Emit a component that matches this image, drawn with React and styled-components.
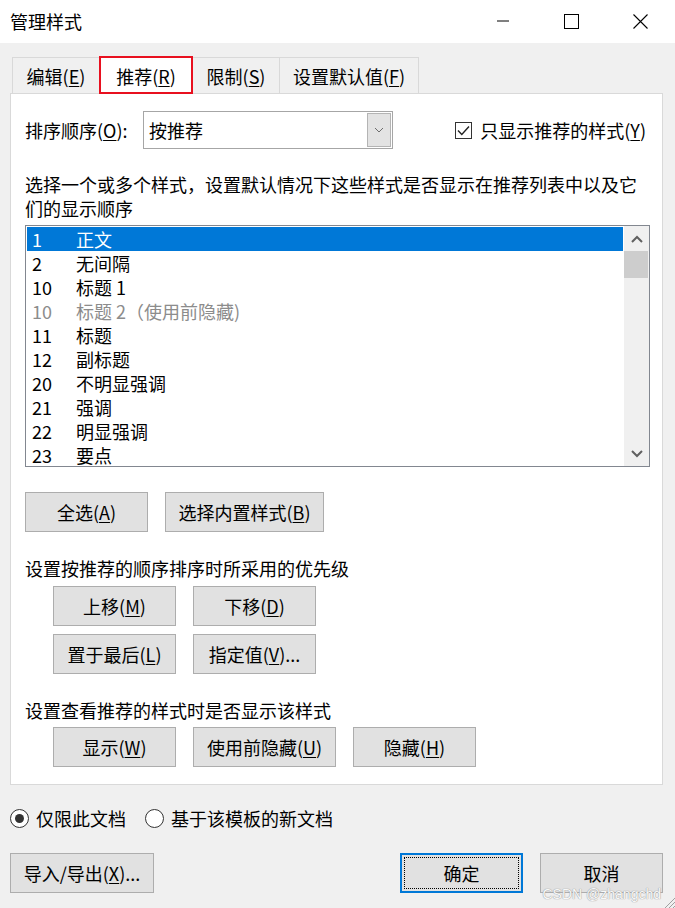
import React from 'react';
import styled, { createGlobalStyle, css } from 'styled-components';

const GlobalStyle = createGlobalStyle`
  html, body {
    margin: 0;
    padding: 0;
    background: #f0f0f0;
  }
  body {
    font-family: "Noto Sans CJK SC", "Noto Sans", sans-serif;
    font-size: 18px;
    color: #000;
  }
  * { box-sizing: border-box; }
`;

const styles = [
  { no: '1', name: '正文', selected: true },
  { no: '2', name: '无间隔' },
  { no: '10', name: '标题 1' },
  { no: '10', name: '标题 2（使用前隐藏)', hidden: true },
  { no: '11', name: '标题' },
  { no: '12', name: '副标题' },
  { no: '20', name: '不明显强调' },
  { no: '21', name: '强调' },
  { no: '22', name: '明显强调' },
  { no: '23', name: '要点' },
];

function Key({ pre, k, post = ')' }) {
  return (
    <>
      {pre}(<Und>{k}</Und>{post}
    </>
  );
}

export default function App() {
  return (
    <Window>
      <GlobalStyle />
      <TitleBar>
        <Title>管理样式</Title>
        <Controls>
          <CtrlBtn>
            <svg width="12" height="2" viewBox="0 0 12 2"><line x1="0" y1="1" x2="12" y2="1" stroke="#000" strokeWidth="1" /></svg>
          </CtrlBtn>
          <CtrlBtn>
            <svg width="15" height="15" viewBox="0 0 15 15"><rect x="0.5" y="0.5" width="14" height="14" fill="none" stroke="#000" strokeWidth="1" /></svg>
          </CtrlBtn>
          <CtrlBtn>
            <svg width="15" height="15" viewBox="0 0 15 15"><path d="M0.5 0.5 L14.5 14.5 M14.5 0.5 L0.5 14.5" stroke="#000" strokeWidth="1.1" /></svg>
          </CtrlBtn>
        </Controls>
      </TitleBar>

      <Body>
        <TabRow>
          <Tab w={88}><Key pre="编辑" k="E" /></Tab>
          <Tab w={94} active><Key pre="推荐" k="R" /></Tab>
          <Tab w={88}><Key pre="限制" k="S" /></Tab>
          <Tab w={140}><Key pre="设置默认值" k="F" /></Tab>
        </TabRow>

        <Panel>
          <SortRow>
            <SortLabel><Key pre="排序顺序" k="O" post="):" /></SortLabel>
            <Combo>
              <ComboValue>按推荐</ComboValue>
              <DropBtn>
                <svg width="10" height="6" viewBox="0 0 10 6"><path d="M1 1 L5 5 L9 1" fill="none" stroke="#6d6d6d" strokeWidth="1" /></svg>
              </DropBtn>
            </Combo>
            <Check>
              <CheckBox>
                <svg width="13" height="11" viewBox="0 0 13 11"><path d="M1 5.5 L4.8 9.5 L12 1.5" fill="none" stroke="#222" strokeWidth="1.4" /></svg>
              </CheckBox>
              <Text><Key pre="只显示推荐的样式" k="Y" /></Text>
            </Check>
          </SortRow>

          <Desc>选择一个或多个样式，设置默认情况下这些样式是否显示在推荐列表中以及它们的显示顺序</Desc>

          <ListBox>
            <Rows>
              {styles.map((s, i) => (
                <Row key={i} selected={s.selected} hidden_={s.hidden}>
                  <Num>{s.no}</Num>
                  <span>{s.name}</span>
                </Row>
              ))}
            </Rows>
            <ScrollBar>
              <ScrollArrow>
                <svg width="12" height="8" viewBox="0 0 12 8"><path d="M1 7 L6 2 L11 7" fill="none" stroke="#606060" strokeWidth="2" /></svg>
              </ScrollArrow>
              <Thumb />
              <Track />
              <ScrollArrow>
                <svg width="12" height="8" viewBox="0 0 12 8"><path d="M1 1 L6 6 L11 1" fill="none" stroke="#606060" strokeWidth="2" /></svg>
              </ScrollArrow>
            </ScrollBar>
          </ListBox>

          <BtnRow top={25} indent={0}>
            <Button w={123}><Key pre="全选" k="A" /></Button>
            <Button w={159}><Key pre="选择内置样式" k="B" /></Button>
          </BtnRow>

          <Section>设置按推荐的顺序排序时所采用的优先级</Section>
          <BtnRow top={6} indent={28}>
            <Button w={123}><Key pre="上移" k="M" /></Button>
            <Button w={123}><Key pre="下移" k="D" /></Button>
          </BtnRow>
          <BtnRow top={8} indent={28}>
            <Button w={123}><Key pre="置于最后" k="L" /></Button>
            <Button w={123}><Key pre="指定值" k="V" post=")..." /></Button>
          </BtnRow>

          <Section>设置查看推荐的样式时是否显示该样式</Section>
          <BtnRow top={5} indent={28}>
            <Button w={123}><Key pre="显示" k="W" /></Button>
            <Button w={143}><Key pre="使用前隐藏" k="U" /></Button>
            <Button w={123}><Key pre="隐藏" k="H" /></Button>
          </BtnRow>
        </Panel>

        <RadioRow>
          <Radio>
            <RadioCircle checked />
            <Text>仅限此文档</Text>
          </Radio>
          <Radio>
            <RadioCircle />
            <Text>基于该模板的新文档</Text>
          </Radio>
        </RadioRow>

        <FooterRow>
          <Button w={144}><Key pre="导入/导出" k="X" post=")..." /></Button>
          <FooterRight>
            <Button w={123} primary><FocusRing>确定</FocusRing></Button>
            <Button w={123}>取消</Button>
          </FooterRight>
        </FooterRow>
      </Body>

      <Watermark>CSDN @zhangchd</Watermark>
      <Grip width="12" height="12" viewBox="0 0 12 12">
        <path d="M12 2 L2 12 M12 6 L6 12 M12 10 L10 12" stroke="#a0a0a0" strokeWidth="1" />
      </Grip>
    </Window>
  );
}

const Window = styled.div`
  position: relative;
  width: 675px;
  height: 908px;
  background: #f0f0f0;
  overflow: hidden;
`;

const TitleBar = styled.div`
  height: 43px;
  background: #fff;
  display: flex;
  align-items: center;
  padding-left: 10px;
`;

const Title = styled.div`
  font-size: 18px;
  line-height: 24px;
  margin-top: -2px;
`;

const Controls = styled.div`
  margin-left: auto;
  display: flex;
  height: 100%;
`;

const CtrlBtn = styled.div`
  width: 69px;
  height: 100%;
  display: flex;
  align-items: center;
  justify-content: center;
  padding-bottom: 1px;
`;

const Body = styled.div`
  padding: 0 12px 0 10px;
`;

const TabRow = styled.div`
  display: flex;
  align-items: flex-end;
  height: 36px;
  margin: 14px 0 0 2px;
  position: relative;
  z-index: 1;
`;

const Tab = styled.div`
  width: ${p => p.w}px;
  height: 36px;
  margin-right: -1px;
  border: 1px solid #d9d9d9;
  border-bottom: none;
  background: #f0f0f0;
  display: flex;
  align-items: center;
  justify-content: center;
  line-height: 24px;
  padding-top: 1px;
  ${p => p.active && css`
    height: 38px;
    margin-bottom: -1px;
    border: 2px solid #e8101f;
    background: #fff;
    position: relative;
    z-index: 2;
  `}
`;

const Und = styled.span`
  text-decoration: underline;
  text-underline-offset: 2px;
  text-decoration-thickness: 1px;
`;

const Panel = styled.div`
  height: 692px;
  background: #fff;
  border: 1px solid #d9d9d9;
  padding: 17px 12px 0 14px;
`;

const Text = styled.span`
  line-height: 24px;
  white-space: nowrap;
`;

const SortRow = styled.div`
  display: flex;
  align-items: center;
  height: 38px;
`;

const SortLabel = styled.span`
  width: 118px;
  line-height: 24px;
  white-space: nowrap;
`;

const Combo = styled.div`
  width: 250px;
  height: 38px;
  border: 1px solid #a6a6a6;
  background: #fff;
  display: flex;
  align-items: stretch;
  padding: 1px;
`;

const ComboValue = styled.div`
  flex: 1;
  padding-left: 4px;
  line-height: 34px;
`;

const DropBtn = styled.div`
  width: 24px;
  background: #e3e3e3;
  border: 1px solid #b4b4b4;
  display: flex;
  align-items: center;
  justify-content: center;
`;

const Check = styled.div`
  margin-left: auto;
  margin-right: 4px;
  display: flex;
  align-items: center;
  gap: 8px;
`;

const CheckBox = styled.div`
  width: 17px;
  height: 17px;
  border: 1px solid #333;
  display: flex;
  align-items: center;
  justify-content: center;
`;

const Desc = styled.p`
  margin: 23px 0 0;
  line-height: 24px;
`;

const ListBox = styled.div`
  margin-top: 5px;
  height: 242px;
  border: 1px solid #828790;
  display: flex;
  overflow: hidden;
`;

const Rows = styled.div`
  flex: 1;
  padding: 1px 0 0 1px;
  overflow: hidden;
`;

const Row = styled.div`
  display: flex;
  height: 24px;
  line-height: 24px;
  padding-left: 5px;
  background: ${p => (p.selected ? '#0078d7' : 'transparent')};
  color: ${p => (p.selected ? '#fff' : p.hidden_ ? '#8c8c8c' : '#000')};
`;

const Num = styled.span`
  width: 44px;
  flex-shrink: 0;
`;

const ScrollBar = styled.div`
  width: 25px;
  background: #f0f0f0;
  display: flex;
  flex-direction: column;
  margin-left: 1px;
`;

const ScrollArrow = styled.div`
  height: 25px;
  display: flex;
  align-items: center;
  justify-content: center;
`;

const Thumb = styled.div`
  height: 27px;
  margin: 0 1px 0 0;
  background: #cdcdcd;
`;

const Track = styled.div`
  flex: 1;
`;

const BtnRow = styled.div`
  display: flex;
  gap: 17px;
  margin-top: ${p => p.top}px;
  padding-left: ${p => p.indent}px;
`;

const Button = styled.div`
  width: ${p => p.w}px;
  height: 40px;
  background: #e1e1e1;
  border: 1px solid #adadad;
  display: flex;
  align-items: center;
  justify-content: center;
  line-height: 24px;
  white-space: nowrap;
  ${p => p.primary && css`
    border: 2px solid #0078d7;
    padding: 2px;
  `}
`;

const FocusRing = styled.div`
  width: 100%;
  height: 100%;
  border: 1px dotted #000;
  display: flex;
  align-items: center;
  justify-content: center;
`;

const Section = styled.div`
  margin-top: 24px;
  line-height: 24px;
`;

const RadioRow = styled.div`
  display: flex;
  align-items: center;
  gap: 19px;
  height: 24px;
  margin-top: 21px;
`;

const Radio = styled.div`
  display: flex;
  align-items: center;
  gap: 7px;
`;

const RadioCircle = styled.div`
  width: 19px;
  height: 19px;
  border-radius: 50%;
  border: 1px solid #333;
  background: #fff;
  display: flex;
  align-items: center;
  justify-content: center;
  &::after {
    content: '';
    display: ${p => (p.checked ? 'block' : 'none')};
    width: 9px;
    height: 9px;
    border-radius: 50%;
    background: #333;
  }
`;

const FooterRow = styled.div`
  display: flex;
  margin-top: 23px;
`;

const FooterRight = styled.div`
  margin-left: auto;
  display: flex;
  gap: 17px;
`;

const Watermark = styled.div`
  position: absolute;
  right: 14px;
  bottom: 6px;
  font-family: "Liberation Sans", sans-serif;
  font-size: 14px;
  color: #f8f8f8;
  text-shadow: 0 0 1px #9a9a9a, 0 0 1px #9a9a9a;
`;

const Grip = styled.svg`
  position: absolute;
  right: 0;
  bottom: 0;
`;
